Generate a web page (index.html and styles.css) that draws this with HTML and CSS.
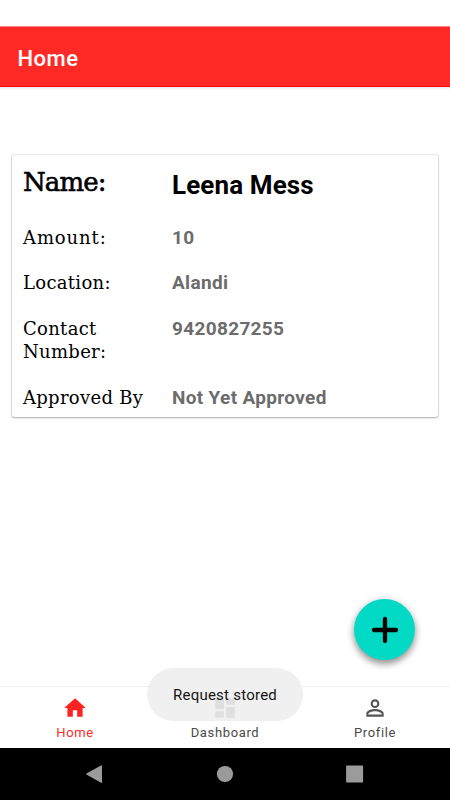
FILE: index.html
```html
<!DOCTYPE html>
<html lang="en">
<head>
	<meta charset="UTF-8">
	<title>Home</title>
	<link rel="stylesheet" href="styles.css">
</head>
<body>
	<div id="app">
		<header class="topbar">Home</header>

		<main class="content">
			<div class="card">
				<div class="label name">Name:</div>
				<div class="value title">Leena Mess</div>
				<div class="label"><span class="amount">Amount:</span></div>
				<div class="value">10</div>
				<div class="label">Location:</div>
				<div class="value">Alandi</div>
				<div class="label">Contact<br>Number:</div>
				<div class="value">9420827255</div>
				<div class="label">Approved By</div>
				<div class="value">Not Yet Approved</div>
			</div>
		</main>

		<nav class="tabs">
			<div class="tab active">
				<svg viewBox="0 0 24 24"><path d="M10 20v-6h4v6h5v-8h3L12 3 2 12h3v8z"/></svg>
				<span>Home</span>
			</div>
			<div class="tab">
				<svg viewBox="0 0 24 24"><path d="M3 13h8V3H3v10zm0 8h8v-6H3v6zm10 0h8V11h-8v10zm0-18v6h8V3h-8z"/></svg>
				<span>Dashboard</span>
			</div>
			<div class="tab">
				<svg viewBox="0 0 24 24"><path d="M12 5.9a2.1 2.1 0 1 1 0 4.2 2.1 2.1 0 0 1 0-4.2m0 9c2.97 0 6.1 1.46 6.1 2.1v1.1H5.9V17c0-.64 3.13-2.1 6.1-2.1M12 4C9.79 4 8 5.79 8 8s1.79 4 4 4 4-1.79 4-4-1.79-4-4-4zm0 9c-2.67 0-8 1.34-8 4v3h16v-3c0-2.66-5.33-4-8-4z"/></svg>
				<span>Profile</span>
			</div>
		</nav>

		<div class="sysbar">
			<svg viewBox="0 0 20 20"><path d="M17 1.8v16.6q-.3.8-1 .4L1.4 10.6q-.6-.5 0-1L16 1.4q.8-.3 1 .4z"/></svg>
			<svg viewBox="0 0 20 20"><circle cx="10" cy="10" r="8.1"/></svg>
			<svg viewBox="0 0 20 20"><rect x="1.1" y="1.5" width="17" height="17" rx="1"/></svg>
		</div>

		<div class="fab">
			<svg viewBox="0 0 28 28"><path d="M14 3v22M3 14h22"/></svg>
		</div>
		<div class="toast">Request stored</div>
	</div>
</body>
</html>
```
FILE: styles.css
```css
*{
	box-sizing: border-box;
	margin: 0;
	padding: 0;
}
body{
	background-color: white;
	font-family: Roboto, sans-serif;
}
#app{
	position: relative;
	display: flex;
	flex-direction: column;
	width: 450px;
	height: 800px;
	padding-top: 26px;
	overflow: hidden;
}
.topbar{
	height: 61px;
	padding-left: 17.5px;
	line-height: 63px;
	font-size: 22px;
	font-weight: 500;
	letter-spacing: 0.5px;
	color: white;
	background-color: #ff2a26;
	border-top: 1px solid #ff8583;
	border-bottom: 1px solid #f50a06;
	box-shadow: 0 1px 3px rgba(0,0,0,0.12);
}
.content{
	flex: 1;
	padding: 68px 12px 0;
}
.card{
	display: grid;
	grid-template-columns: 149px 1fr;
	grid-template-rows: 71px 45px 46px 68.5px 31px;
	height: 262px;
	padding-left: 11px;
	border-radius: 2px;
	box-shadow: 0 0 1.5px rgba(0,0,0,0.4), 0 1px 2px rgba(0,0,0,0.25);
}
.label{
	font-family: "DejaVu Serif", serif;
	font-size: 18px;
	line-height: 23px;
	letter-spacing: 0.3px;
	color: black;
}
.amount{
	letter-spacing: 0.9px;
}
.name{
	padding-top: 12px;
	line-height: 30px;
	font-size: 26px;
	letter-spacing: -0.9px;
	-webkit-text-stroke: 0.6px black;
}
.value{
	font-size: 19px;
	line-height: 23px;
	font-weight: bold;
	letter-spacing: 0.33px;
	color: #6c6c6c;
}
.title{
	padding-top: 15px;
	font-size: 26px;
	line-height: 31px;
	letter-spacing: 0.12px;
	color: black;
}
.tabs{
	display: flex;
	height: 62px;
	border-top: 1px solid #f1f1f1;
}
.tab{
	flex: 1;
	display: flex;
	flex-direction: column;
	align-items: center;
	padding-top: 8px;
	font-size: 13px;
	line-height: 16px;
	letter-spacing: 0.65px;
	color: #4a4a4a;
}
.tab svg{
	width: 26px;
	height: 26px;
	margin-bottom: 4px;
	fill: #555;
}
.tab.active{
	color: #ff2a26;
}
.tab.active svg{
	fill: #ff2222;
}
.sysbar{
	display: flex;
	justify-content: center;
	gap: 110px;
	height: 52.5px;
	padding-top: 16px;
	background-color: black;
}
.sysbar svg{
	width: 20px;
	height: 20px;
	fill: #9b9b9b;
}
.fab{
	position: absolute;
	left: 354px;
	top: 599px;
	display: flex;
	align-items: center;
	justify-content: center;
	width: 61px;
	height: 61px;
	border-radius: 50%;
	background-color: #03dac5;
	box-shadow: 0 4px 7px rgba(0,0,0,0.38), 0 1px 10px rgba(0,0,0,0.12);
}
.fab svg{
	width: 28px;
	height: 28px;
	stroke: black;
	stroke-width: 4.3;
	stroke-linecap: round;
}
.toast{
	position: absolute;
	left: 147px;
	top: 667.5px;
	width: 156px;
	height: 53.5px;
	border-radius: 27px;
	text-align: center;
	font-size: 15px;
	line-height: 55px;
	letter-spacing: 0.24px;
	color: #151515;
	background-color: rgba(238,238,238,0.9);
}
```
